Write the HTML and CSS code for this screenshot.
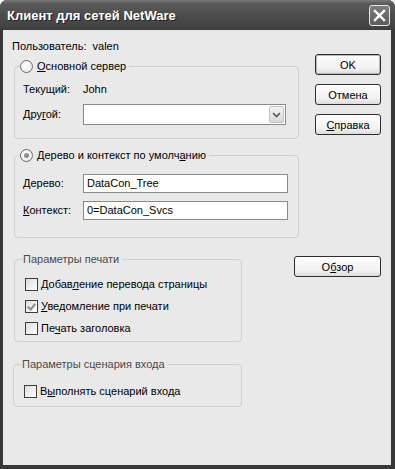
FILE: index.html
```
<!DOCTYPE html>
<html lang="ru">
<head>
  <meta charset="UTF-8" />
  <meta name="viewport" content="width=device-width, initial-scale=1" />
  <title>Клиент для сетей NetWare</title>
  <link rel="stylesheet" href="styles.css">
</head>
<body>

  <div class="window">
    <div class="titlebar">
      <span class="title">Клиент для сетей NetWare</span>
      <span class="close">
        <svg width="13" height="13" viewBox="0 0 13 13">
          <path d="M2 2 L11 11 M11 2 L2 11" stroke="#fff" stroke-width="2.4" stroke-linecap="square" />
        </svg>
      </span>
    </div>

    <div class="client">
      <div class="top">
        <div class="main">
          <div class="user">Пользователь:&nbsp; valen</div>

          <fieldset class="group group-server">
            <legend><span class="radio"></span><span><u>О</u>сновной сервер</span></legend>
            <div class="row row-current">
              <span class="label">Текущий:</span>
              <span>John</span>
            </div>
            <div class="row row-other">
              <span class="label">Дру<u>г</u>ой:</span>
              <div class="select">
                <span class="arrow">
                  <svg width="9" height="6" viewBox="0 0 9 6">
                    <path d="M1 1 L4.5 4.5 L8 1" fill="none" stroke="#555" stroke-width="1.6" />
                  </svg>
                </span>
              </div>
            </div>
          </fieldset>

          <fieldset class="group group-tree">
            <legend><span class="radio checked"></span><span>Дерево и контекст по умолч<u>а</u>нию</span></legend>
            <div class="row">
              <span class="label"><u>Д</u>ерево:</span>
              <div class="textbox">DataCon_Tree</div>
            </div>
            <div class="row row-context">
              <span class="label"><u>К</u>онтекст:</span>
              <div class="textbox">0=DataCon_Svcs</div>
            </div>
          </fieldset>
        </div>

        <div class="buttons">
          <button class="btn default">OK</button>
          <button class="btn">Отмена</button>
          <button class="btn"><u>С</u>правка</button>
        </div>
      </div>

      <div class="middle">
        <fieldset class="group group-print">
          <legend class="caption">Параметры печати</legend>
          <div class="check"><span class="box"></span><span>Добав<u>л</u>ение перевода страницы</span></div>
          <div class="check"><span class="box checked"></span><span><u>У</u>ведомление при печати</span></div>
          <div class="check"><span class="box"></span><span>Пе<u>ч</u>ать заголовка</span></div>
        </fieldset>
        <button class="btn browse">О<u>б</u>зор</button>
      </div>

      <fieldset class="group group-login">
        <legend class="caption">Параметры сценария входа</legend>
        <div class="check"><span class="box"></span><span>В<u>ы</u>полнять сценарий входа</span></div>
      </fieldset>
    </div>
  </div>

</body>
</html>
```

FILE: styles.css
```
body {
  margin: 0;
  padding: 0;
  font-family: 'Liberation Sans', Arial, sans-serif;
  font-size: 11px;
  color: #000;
  background: #fff;
}

.window {
  width: 395px;
  height: 469px;
  box-sizing: border-box;
  background: #383838;
  border-radius: 7px 7px 0 0;
  display: flex;
  flex-direction: column;
}

.titlebar {
  height: 30px;
  flex: none;
  display: flex;
  align-items: center;
  justify-content: space-between;
  padding: 0 5px 0 7px;
  border-radius: 7px 7px 0 0;
  background: linear-gradient(#7a7a7a, #5a5a5a 12%, #4c4c4c 50%, #444 85%, #3c3c3c);
}

.title {
  font-family: 'Liberation Sans', Arial, sans-serif;
  font-weight: bold;
  font-size: 13px;
  color: #fff;
  text-shadow: 1px 1px 0 #222;
}

.close {
  width: 19px;
  height: 19px;
  border: 1px solid #e8e8e8;
  border-radius: 3px;
  background: linear-gradient(#7c7c7c, #5c5c5c);
  display: flex;
  align-items: center;
  justify-content: center;
}

.client {
  flex: 1;
  margin: 0 4px 4px 3px;
  padding: 10px 10px 0 9px;
  background: #e9e9e9;
  line-height: 13px;
}

.top {
  display: flex;
  justify-content: space-between;
}

.main {
  width: 287px;
}

.user {
  height: 13px;
}

.group {
  margin: 0 0 0 2px;
  border: 1px solid #d0d0d0;
  border-radius: 4px;
  padding: 0 8px 13px 8px;
  min-width: 0;
}

.group legend {
  display: flex;
  align-items: center;
  gap: 4px;
  padding: 0 3px 0 0;
  margin-left: -3px;
  height: 13px;
}

.group-server {
  width: 285px;
  box-sizing: border-box;
  margin-top: 7px;
  padding-top: 10px;
}

.group-tree {
  width: 285px;
  box-sizing: border-box;
  margin-top: 10px;
  padding-top: 12px;
  padding-bottom: 17px;
}

.row {
  display: flex;
  align-items: center;
}

.label {
  width: 60px;
  flex: none;
}

.row-other,
.row-context {
  margin-top: 8px;
}

.select {
  width: 203px;
  height: 21px;
  box-sizing: border-box;
  border: 1px solid #8a8a8a;
  background: #fff;
  display: flex;
  justify-content: flex-end;
  align-items: center;
  padding-right: 1px;
}

.arrow {
  width: 15px;
  height: 17px;
  box-sizing: border-box;
  border: 1px solid #c4c4c4;
  border-radius: 2px;
  background: linear-gradient(#f4f4f4, #d8d8d8);
  display: flex;
  align-items: center;
  justify-content: center;
}

.textbox {
  width: 205px;
  height: 19px;
  box-sizing: border-box;
  border: 1px solid #8a8a8a;
  background: #fff;
  padding: 2px 0 0 3px;
}

.radio {
  width: 13px;
  height: 13px;
  box-sizing: border-box;
  border: 1px solid #6a6a6a;
  border-radius: 50%;
  background: radial-gradient(circle at 40% 40%, #fff, #e2e2e2);
  display: flex;
  align-items: center;
  justify-content: center;
  flex: none;
}

.radio.checked::after {
  content: "";
  width: 5px;
  height: 5px;
  border-radius: 50%;
  background: #8c8c8c;
}

.buttons {
  width: 66px;
  margin-top: 14px;
  display: flex;
  flex-direction: column;
  gap: 9px;
}

.btn {
  font-family: 'Liberation Sans', Arial, sans-serif;
  font-size: 11px;
  color: #000;
  height: 21px;
  padding: 0;
  border: 1px solid #2e2e2e;
  border-radius: 3px;
  background: linear-gradient(#fdfdfd, #f2f2f2 70%, #dcdcdc);
  cursor: pointer;
}

.btn.default {
  box-shadow: inset 0 0 0 1px #b8b8b8;
}

.middle {
  display: flex;
  justify-content: space-between;
  align-items: flex-start;
  margin-top: 15px;
}

.browse {
  width: 87px;
  margin-top: 3px;
}

.group-print {
  width: 228px;
  box-sizing: border-box;
  padding: 12px 8px 6px 10px;
}

.caption {
  color: #4a4a4a;
  margin-left: -2px !important;
}

.check {
  display: flex;
  align-items: center;
  gap: 3px;
  height: 13px;
}

.check + .check {
  margin-top: 9px;
}

.box {
  width: 13px;
  height: 13px;
  box-sizing: border-box;
  border: 1px solid #3c3c3c;
  background: linear-gradient(135deg, #dcdcdc, #fff);
  flex: none;
  display: flex;
  align-items: center;
  justify-content: center;
}

.box.checked::after {
  content: "";
  width: 3px;
  height: 6px;
  border: solid #8a8a8a;
  border-width: 0 2px 2px 0;
  transform: rotate(40deg);
  margin-top: -2px;
}

.group-login {
  width: 229px;
  box-sizing: border-box;
  margin: 16px 0 0 1px;
  padding: 14px 8px 8px 10px;
}
```
